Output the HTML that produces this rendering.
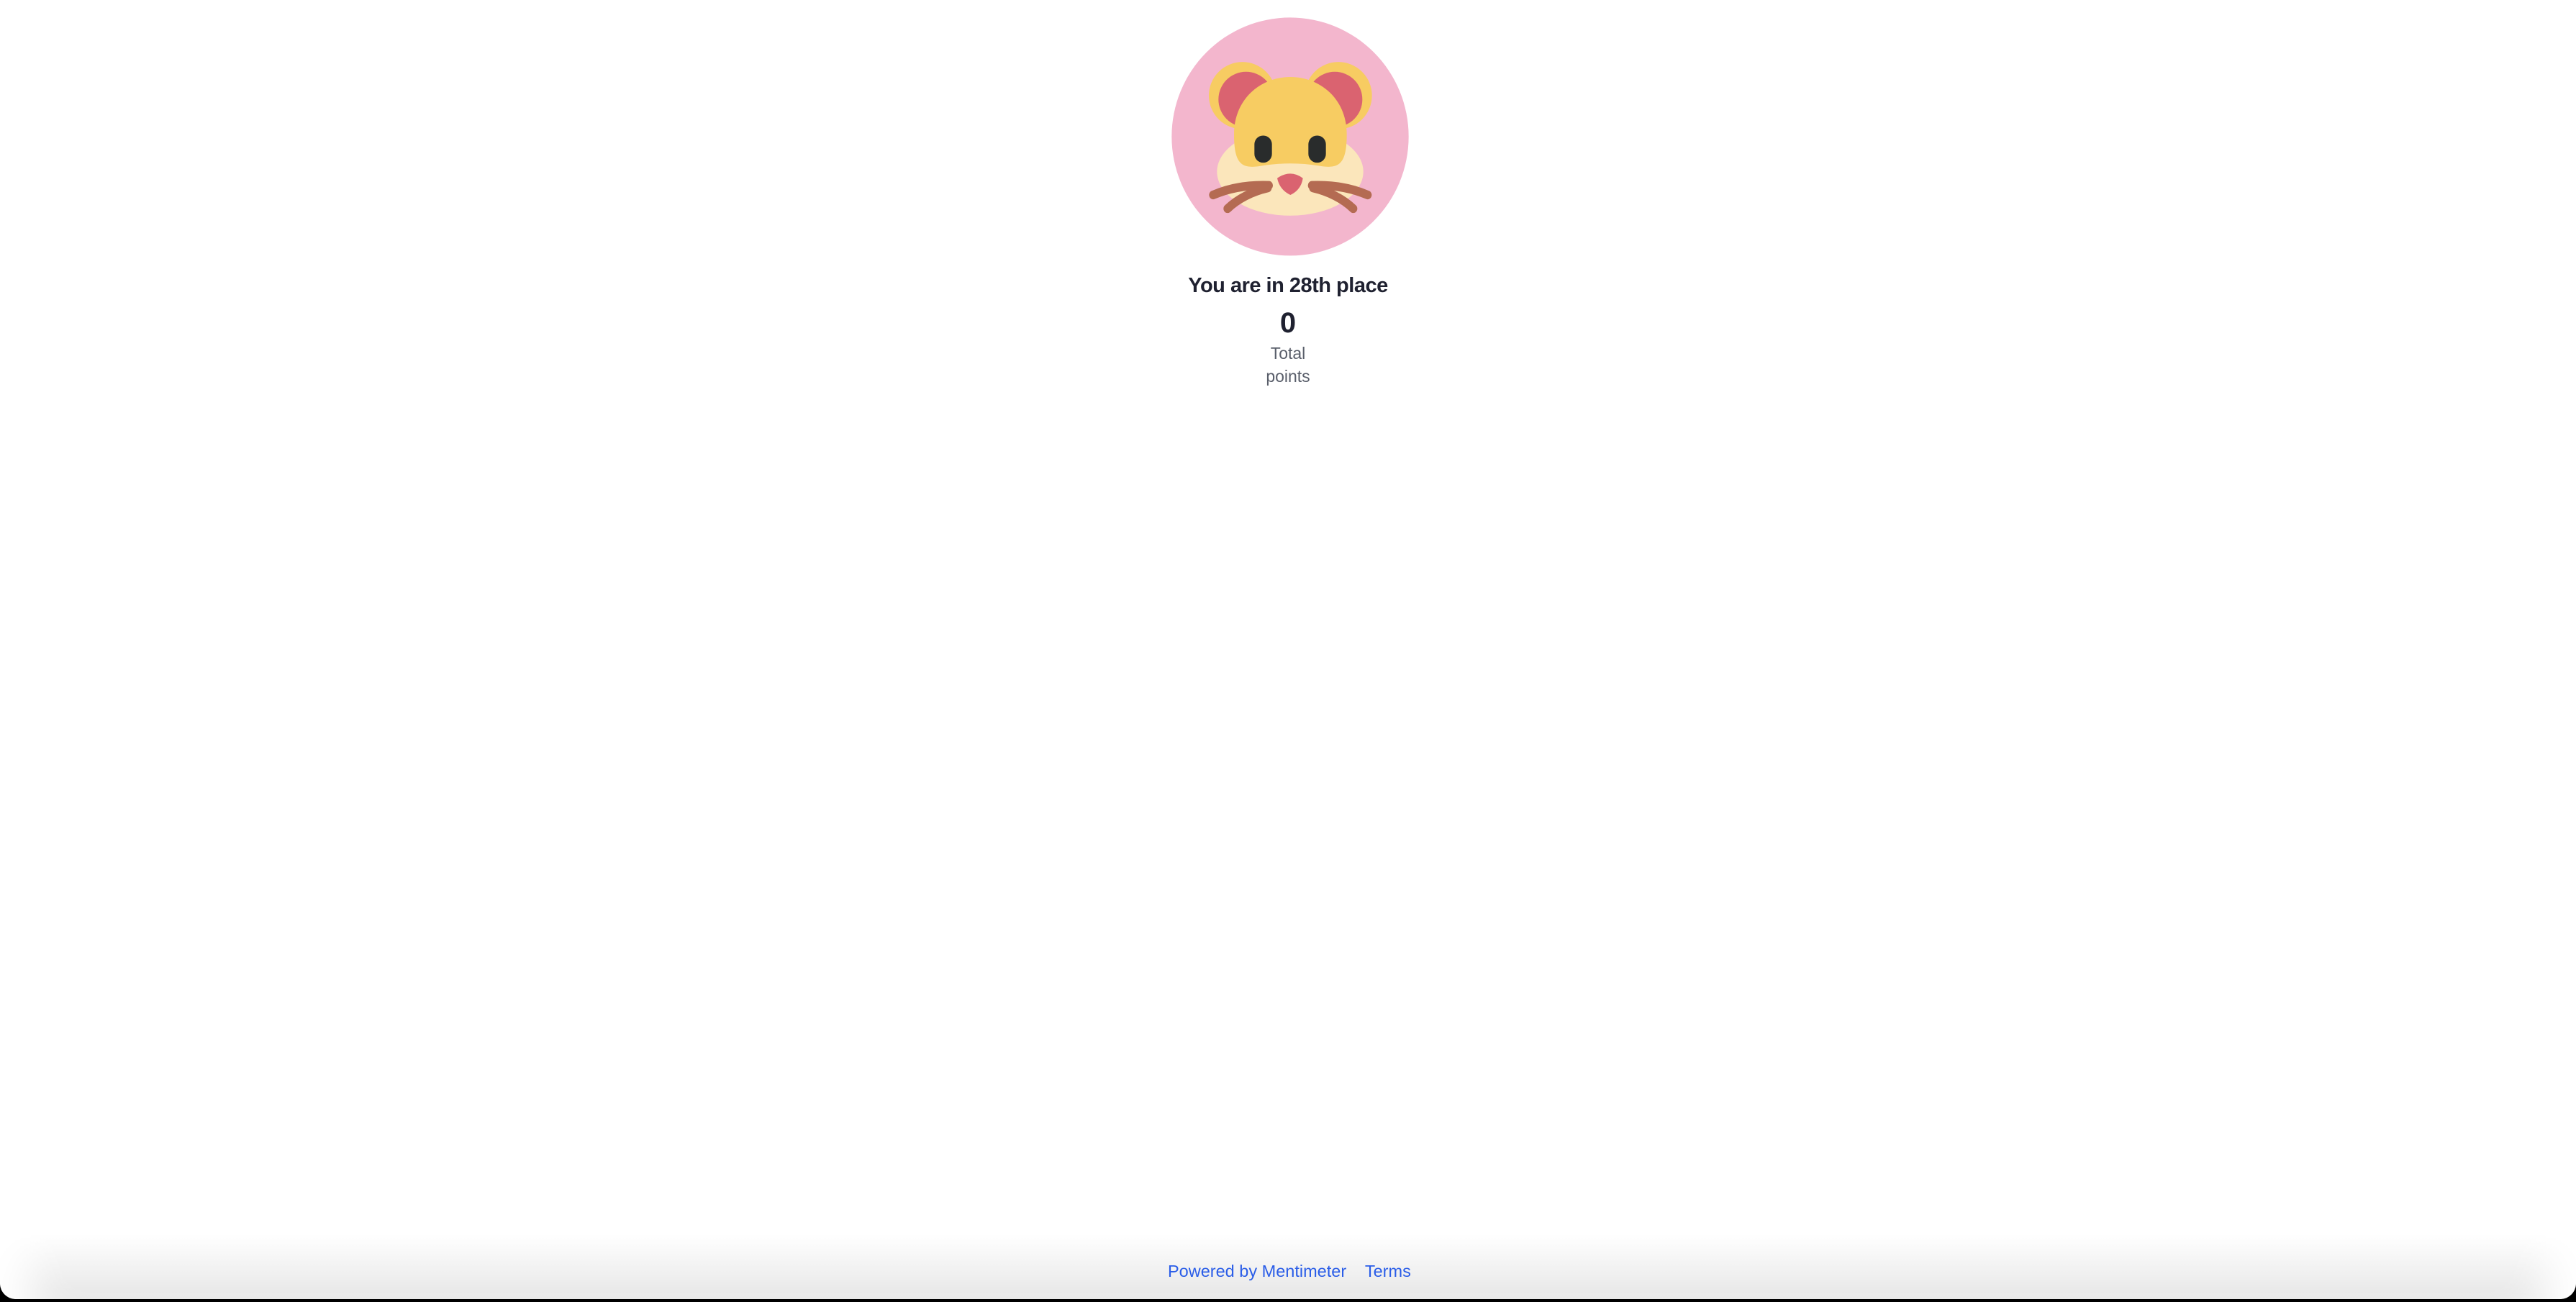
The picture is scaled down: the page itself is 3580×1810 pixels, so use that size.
<!DOCTYPE html>
<html><head><meta charset="utf-8"><style>
html,body{margin:0;padding:0;width:3580px;height:1810px;overflow:hidden;background:#000;font-family:"Liberation Sans",sans-serif}
.page{position:absolute;left:0;top:0;width:3580px;height:1806px;background:#fff;border-radius:0 0 22px 22px;overflow:hidden}
.shade{position:absolute;left:0;right:0;bottom:0;height:90px;background:linear-gradient(#fff,#e6e6e6);border-radius:0 0 22px 22px;box-shadow:inset 80px 0 60px -40px #fff,inset -80px 0 60px -40px #fff}
svg{position:absolute;left:1600px;top:0}
.t1{position:absolute;left:0;width:3580px;text-align:center;top:381px;font-size:29px;font-weight:bold;color:#1f2130;letter-spacing:-0.5px}
.t2{position:absolute;left:0;width:3580px;text-align:center;top:427px;font-size:40px;font-weight:bold;color:#1f2130}
.t3{position:absolute;left:1740px;width:100px;text-align:center;top:475px;font-size:23px;line-height:32px;color:#595e6a}
.foot{position:absolute;left:1623px;top:1754px;font-size:23.5px;color:#2a5de8;white-space:pre}
</style></head><body><div class="page">
<div class="shade"></div>
<svg width="380" height="560" viewBox="0 0 1140 1560" preserveAspectRatio="none">
<ellipse cx="579" cy="529" rx="494" ry="461" fill="#f3b6cd"/>
<ellipse cx="380" cy="370" rx="140" ry="130" fill="#f7cc62"/>
<ellipse cx="395" cy="385" rx="115" ry="107" fill="#da6370"/>
<ellipse cx="780" cy="370" rx="140" ry="130" fill="#f7cc62"/>
<ellipse cx="765" cy="385" rx="115" ry="107" fill="#da6370"/>
<ellipse cx="579" cy="665" rx="305" ry="170" fill="#fbe6bb"/>
<path d="M345,520 C345,380 460,298 580,298 C700,298 815,380 815,520 C815,640 780,655 700,642 C620,630 540,630 460,642 C380,655 345,640 345,520Z" fill="#f7cc62"/>
<rect x="430" y="525" width="73" height="105" rx="36" ry="34" fill="#292c2c"/>
<rect x="655" y="525" width="73" height="105" rx="36" ry="34" fill="#292c2c"/>
<path d="M525,690 Q580,655 632,690 Q625,735 580,755 Q535,735 525,690Z" fill="#da6370"/>
<g stroke="#b46b52" stroke-width="34" stroke-linecap="round" fill="none">
<path d="M490,718 C400,715 320,730 258,755"/><path d="M485,728 C420,742 360,770 318,808"/>
<path d="M670,718 C760,715 840,730 902,755"/><path d="M675,728 C740,742 800,770 842,808"/>
</g>
</svg>
<div class="t1">You are in 28th place</div>
<div class="t2">0</div>
<div class="t3">Total<br>points</div>
<div class="foot">Powered by Mentimeter    Terms</div>
</div></body></html>
